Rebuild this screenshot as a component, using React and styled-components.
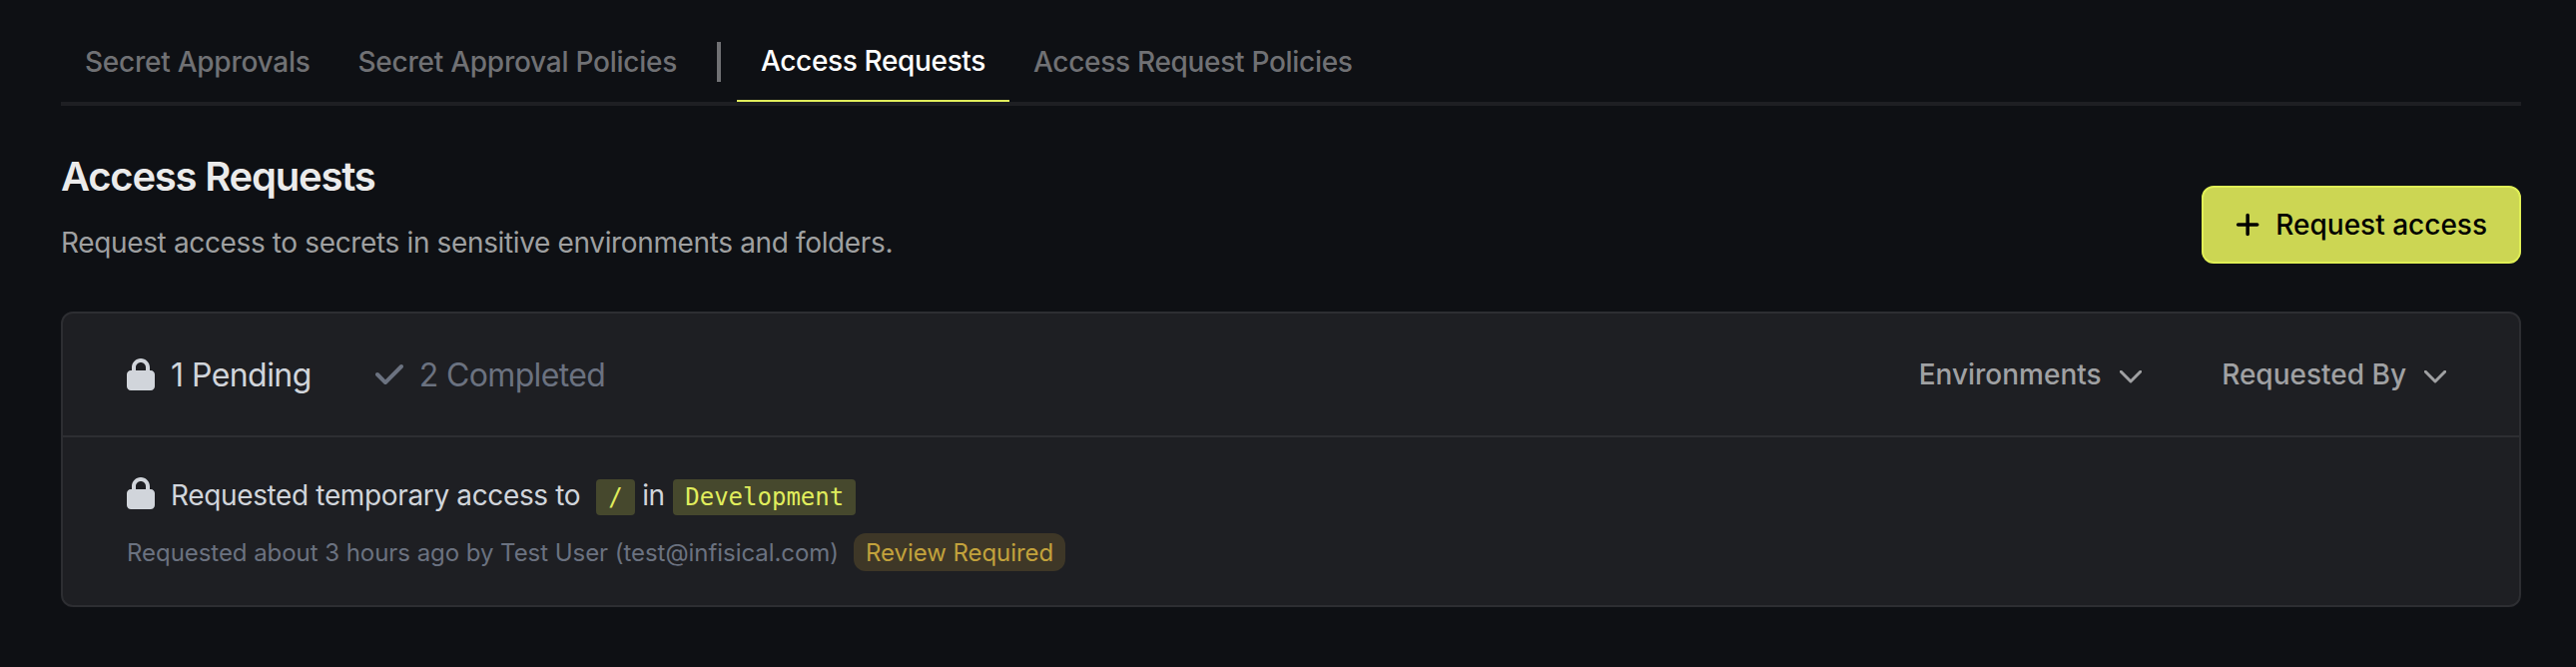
import React from "react";
import styled, { createGlobalStyle } from "styled-components";
import { FaLock, FaCheck, FaPlus } from "react-icons/fa6";

const GlobalStyle = createGlobalStyle`
  * { box-sizing: border-box; }
  body {
    margin: 0;
    background: #0e1014;
    font-family: Inter, "Liberation Sans", sans-serif;
  }
`;

const Page = styled.main`
  min-height: 668px;
  padding: 0 55px 60px 61px;
  background: #0e1014;
`;

const TabList = styled.nav`
  display: flex;
  height: 106px;
  padding-top: 22px;
  border-bottom: 4px solid #1e1f23;
`;

const Tab = styled.button`
  display: flex;
  align-items: center;
  padding: 0 24px;
  border: 0;
  border-bottom: ${(p) => (p.$active ? "2px solid #e0ed5c" : "0")};
  background: none;
  color: ${(p) => (p.$active ? "#ffffff" : "#707174")};
  font: 500 28px Inter, sans-serif;
  letter-spacing: ${(p) => (p.$active ? "-0.35px" : "-0.25px")};
  white-space: nowrap;

  &:last-child {
    letter-spacing: -0.3px;
  }
`;

const Separator = styled.span`
  align-self: center;
  width: 4px;
  height: 40px;
  margin: 0 16px;
  background: #707174;
`;

const Header = styled.header`
  display: flex;
  justify-content: space-between;
  align-items: flex-end;
  height: 158px;
`;

const Title = styled.h1`
  margin: 0 0 21px;
  color: #ebebeb;
  font-size: 40px;
  font-weight: 600;
  line-height: 48px;
  letter-spacing: -1.22px;
`;

const Description = styled.p`
  margin: 0;
  color: #9fa0a1;
  font-size: 28px;
  line-height: 42px;
  letter-spacing: -0.36px;
`;

const PrimaryButton = styled.button`
  display: flex;
  align-items: center;
  gap: 16px;
  width: 320px;
  height: 78px;
  padding: 0 32px;
  border: 2px solid #e0ef56;
  border-radius: 12px;
  background: #ccd653;
  color: #000000;
  font: 500 28px Inter, sans-serif;
  white-space: nowrap;

  svg {
    width: 24.5px;
    height: 28px;
  }
`;

const Card = styled.section`
  margin-top: 48px;
  height: 296px;
  border: 2px solid #2d2e32;
  border-radius: 12px;
  background: #1e1f23;
`;

const CardHeader = styled.div`
  display: flex;
  align-items: center;
  height: 124px;
  padding: 0 73px 0 64px;
  border-bottom: 2px solid #2d2e32;
`;

const StatusTab = styled.div`
  display: flex;
  align-items: center;
  gap: 16px;
  margin-right: 64px;
  color: ${(p) => (p.$selected ? "#d1d5db" : "#6b7280")};
  font-size: 32px;
  letter-spacing: ${(p) => (p.$selected ? "-0.55px" : "-0.65px")};
  white-space: nowrap;

  svg {
    width: 28px;
    height: 32px;
  }
`;

const Filters = styled.div`
  display: flex;
  gap: 80.5px;
  margin-left: auto;
`;

const Filter = styled.button`
  display: flex;
  align-items: center;
  gap: 18px;
  padding: 0;
  border: 0;
  background: none;
  color: #a0a1a3;
  font: 500 28px Inter, sans-serif;
  white-space: nowrap;

  svg {
    margin-top: 4px;
  }
`;

const Request = styled.article`
  display: flex;
  flex-direction: column;
  gap: 18px;
  padding: 41px 64px 0;
`;

const RequestTitle = styled.div`
  display: flex;
  align-items: baseline;
  height: 37px;
  color: #d1d5db;
  font-size: 28px;
  line-height: 34px;
  letter-spacing: -0.36px;
  white-space: pre;
`;

const LockIcon = styled(FaLock)`
  align-self: flex-start;
  width: 28px;
  height: 32px;
  margin: -1px 16px 0 0;
`;

const Code = styled.code`
  height: 36px;
  padding: 0 12px;
  margin: ${(p) => p.$margin};
  border-radius: 4px;
  background: #46482d;
  color: #e0ed5c;
  font: 24px/36px "DejaVu Sans Mono", monospace;
  letter-spacing: 0;
`;

const RequestMeta = styled.div`
  display: flex;
  align-items: center;
  gap: 15px;
  height: 38px;
  color: #6b7280;
  font-size: 24px;
  letter-spacing: -0.05px;
  white-space: nowrap;
`;

const Badge = styled.span`
  display: flex;
  align-items: center;
  justify-content: center;
  width: 212px;
  height: 38px;
  border-radius: 12px;
  background: #3e3727;
  color: #c2a23c;
`;

const ChevronDown = () => (
  <svg width="22" height="13" viewBox="0 0 22 13" fill="none" stroke="currentColor" strokeWidth="3">
    <path d="M1.3 1.3 L11 11 L20.7 1.3" strokeLinecap="round" strokeLinejoin="round" />
  </svg>
);

export default function App() {
  return (
    <Page>
      <GlobalStyle />
      <TabList>
        <Tab>Secret Approvals</Tab>
        <Tab>Secret Approval Policies</Tab>
        <Separator />
        <Tab $active>Access Requests</Tab>
        <Tab>Access Request Policies</Tab>
      </TabList>
      <Header>
        <div>
          <Title>Access Requests</Title>
          <Description>Request access to secrets in sensitive environments and folders.</Description>
        </div>
        <PrimaryButton>
          <FaPlus />
          Request access
        </PrimaryButton>
      </Header>
      <Card>
        <CardHeader>
          <StatusTab $selected>
            <FaLock />
            1 Pending
          </StatusTab>
          <StatusTab>
            <FaCheck />
            2 Completed
          </StatusTab>
          <Filters>
            <Filter>
              Environments
              <ChevronDown />
            </Filter>
            <Filter>
              Requested By
              <ChevronDown />
            </Filter>
          </Filters>
        </CardHeader>
        <Request>
          <RequestTitle>
            <LockIcon />
            Requested temporary access to
            <Code $margin="0 7.5px 0 16px">/</Code>
            in
            <Code $margin="0 0 0 8.5px">Development</Code>
          </RequestTitle>
          <RequestMeta>
            Requested about 3 hours ago by Test User (test@infisical.com)
            <Badge>Review Required</Badge>
          </RequestMeta>
        </Request>
      </Card>
    </Page>
  );
}
